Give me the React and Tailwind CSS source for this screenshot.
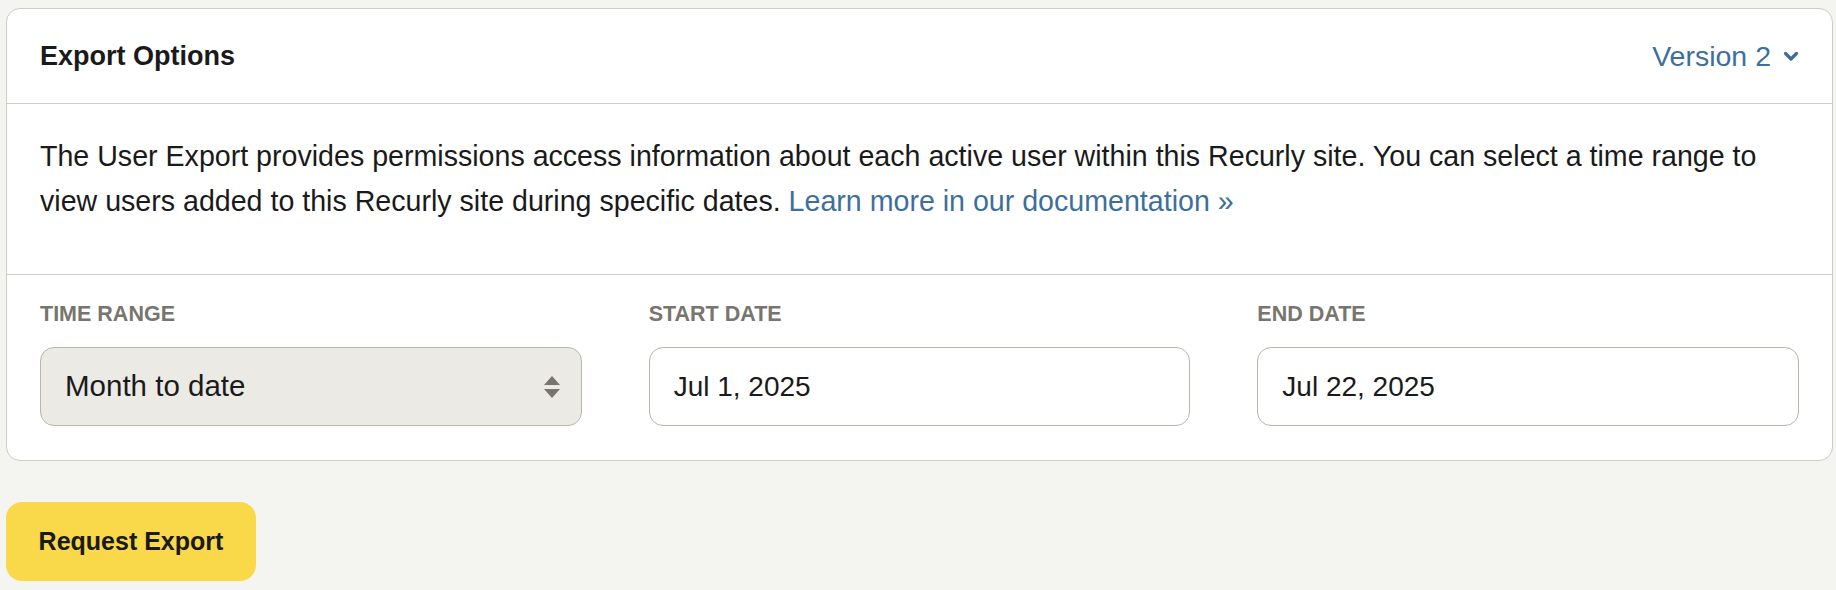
export default function App() {
  return (
    <div className="min-h-[590px] w-full bg-[#f4f4f0] pt-[8px] pl-[6px] pr-[3px] font-['Liberation_Sans',Arial,sans-serif] text-[#1a1a1a]">
      <div className="rounded-[14px] border border-[#cfccc4] bg-white">
        <div className="flex h-[95px] items-center justify-between border-b border-[#cfccc4] px-[33px]">
          <h2 className="text-[27px] font-bold">Export Options</h2>
          <button className="flex items-center gap-[12px] text-[28.5px] text-[#3d6f9c]">
            <span>Version 2</span>
            <svg width="16" height="11" viewBox="0 0 16 11" fill="none">
              <path d="M2.5 2.5l5.5 5.5 5.5-5.5" stroke="#3d6f9c" strokeWidth="3.2" strokeLinecap="round" strokeLinejoin="round" />
            </svg>
          </button>
        </div>
        <div className="border-b border-[#cfccc4] px-[33px] pt-[30px] pb-[50px] text-[28.6px] leading-[45px]">
          The User Export provides permissions access information about each active user within this Recurly site. You can select a time range to view users added to this Recurly site during specific dates.{" "}
          <a className="text-[#3d6f9c]">Learn more in our documentation »</a>
        </div>
        <div className="grid grid-cols-3 gap-x-[67px] px-[33px] pt-[27px] pb-[34px]">
          <div className="flex flex-col gap-[21px]">
            <label className="text-[21.5px] font-bold uppercase leading-[24px] text-[#77756d]">Time Range</label>
            <div className="flex h-[79px] items-center justify-between rounded-[14px] border border-[#b9b6ac] bg-[#ebeae5] pl-[24px] pr-[20px] text-[29.5px]">
              <span>Month to date</span>
              <svg width="18" height="28" viewBox="0 0 18 28">
                <path d="M9 3L17 12H1Z" fill="#77756d" />
                <path d="M1 16H17L9 25Z" fill="#77756d" />
              </svg>
            </div>
          </div>
          <div className="flex flex-col gap-[21px]">
            <label className="text-[21.5px] font-bold uppercase leading-[24px] text-[#77756d]">Start Date</label>
            <div className="flex h-[79px] items-center rounded-[14px] border border-[#b9b6ac] bg-white px-[24px] text-[28px]">
              Jul 1, 2025
            </div>
          </div>
          <div className="flex flex-col gap-[21px]">
            <label className="text-[21.5px] font-bold uppercase leading-[24px] text-[#77756d]">End Date</label>
            <div className="flex h-[79px] items-center rounded-[14px] border border-[#b9b6ac] bg-white px-[24px] text-[28px]">
              Jul 22, 2025
            </div>
          </div>
        </div>
      </div>
      <button className="mt-[41px] flex h-[79px] w-[250px] items-center justify-center rounded-[16px] bg-[#f9d84a] text-[25px] font-bold">
        Request Export
      </button>
    </div>
  );
}
